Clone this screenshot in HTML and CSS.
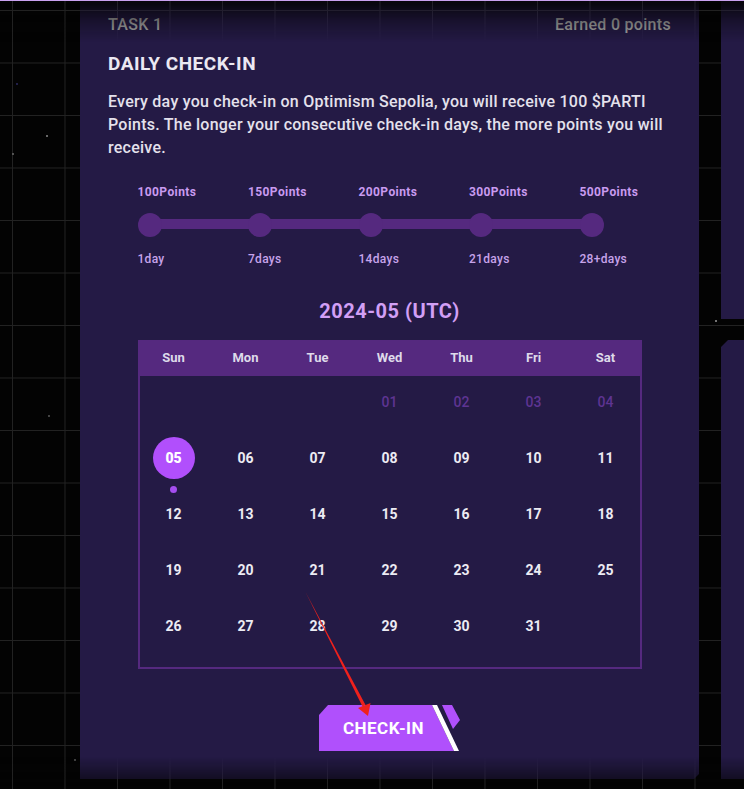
FILE: index.html
```html
<!DOCTYPE html>
<html lang="en">
<head>
  <meta charset="UTF-8">
  <title>Daily Check-in</title>
  <link rel="stylesheet" href="styles.css">
</head>
<body>
  <div class="topline"></div>
  <div class="fade fade-top"></div>
  <div class="fade fade-bottom"></div>

  <span class="star star-1"></span>
  <span class="star star-2"></span>
  <span class="star star-3"></span>
  <span class="star star-4"></span>
  <span class="star star-5"></span>
  <span class="star star-6"></span>

  <main class="board">
    <section class="task-card">
      <div class="task-head">
        <span>TASK 1</span>
        <span>Earned 0 points</span>
      </div>
      <h2 class="task-title">DAILY CHECK-IN</h2>
      <p class="task-desc">Every day you check-in on Optimism Sepolia, you will receive 100 $PARTI Points. The longer your consecutive check-in days, the more points you will receive.</p>

      <div class="timeline">
        <div class="step"><span class="step-points">100Points</span><span class="step-dot"></span><span class="step-days">1day</span></div>
        <div class="step"><span class="step-points">150Points</span><span class="step-dot"></span><span class="step-days">7days</span></div>
        <div class="step"><span class="step-points">200Points</span><span class="step-dot"></span><span class="step-days">14days</span></div>
        <div class="step"><span class="step-points">300Points</span><span class="step-dot"></span><span class="step-days">21days</span></div>
        <div class="step"><span class="step-points">500Points</span><span class="step-dot"></span><span class="step-days">28+days</span></div>
      </div>

      <h3 class="month">2024-05 (UTC)</h3>
      <div class="calendar">
        <div class="cal-head">
          <span>Sun</span><span>Mon</span><span>Tue</span><span>Wed</span><span>Thu</span><span>Fri</span><span>Sat</span>
        </div>
        <div class="cal-body">
          <span></span><span></span><span></span>
          <span class="past">01</span><span class="past">02</span><span class="past">03</span><span class="past">04</span>
          <span class="today"><b>05</b></span><span>06</span><span>07</span><span>08</span><span>09</span><span>10</span><span>11</span>
          <span>12</span><span>13</span><span>14</span><span>15</span><span>16</span><span>17</span><span>18</span>
          <span>19</span><span>20</span><span>21</span><span>22</span><span>23</span><span>24</span><span>25</span>
          <span>26</span><span>27</span><span>28</span><span>29</span><span>30</span><span>31</span><span></span>
        </div>
      </div>

      <div class="actions">
        <button class="checkin-btn" type="button">
          <svg viewBox="0 0 141 46" width="141" height="46">
            <polygon points="9,0 113,0 135,46 0,46 0,10" fill="#b050fc"/>
            <polygon points="113,0 118,0 140,46 135,46" fill="#ffffff"/>
            <polygon points="123,0 133,0 141,15 134,24" fill="#b050fc"/>
          </svg>
          <span>CHECK-IN</span>
        </button>
      </div>
    </section>

    <aside class="side">
      <div class="side-card"></div>
      <div class="side-card cut"></div>
    </aside>
  </main>

  <!-- red pointer drawn on the screenshot -->
  <svg class="pointer" viewBox="0 0 744 789" width="744" height="789">
    <polygon points="305,591 365.5,705 362.5,706.5" fill="#f0211c"/>
    <polygon points="368,716 358,708 370.5,703" fill="#f0211c"/>
  </svg>
</body>
</html>
```

FILE: styles.css
```css
* {
  box-sizing: border-box;
}

body {
  margin: 0;
  height: 789px;
  overflow: hidden;
  font-family: Roboto, "Noto Sans", sans-serif;
  background-color: #030303;
  background-image:
    linear-gradient(90deg, #222 1px, transparent 1px),
    linear-gradient(#222 1px, transparent 1px);
  background-size: 52.5px 52.5px;
  background-position: 12px 0, 0 10px;
}

.topline {
  position: fixed;
  top: 0;
  left: 0;
  right: 0;
  height: 1px;
  background: #c9a2ef;
  z-index: 5;
}

.fade {
  position: fixed;
  left: 0;
  right: 0;
  z-index: 4;
  pointer-events: none;
  background-color: #030303;
  background-image:
    linear-gradient(90deg, #222 1px, transparent 1px),
    linear-gradient(#222 1px, transparent 1px);
  background-size: 52.5px 52.5px;
}

.fade-top {
  top: 0;
  height: 42px;
  background-position: 12px 0, 0 10px;
  -webkit-mask-image: linear-gradient(rgba(0,0,0,0.9), rgba(0,0,0,0.35) 50%, transparent);
  mask-image: linear-gradient(rgba(0,0,0,0.9), rgba(0,0,0,0.35) 50%, transparent);
}

.fade-bottom {
  top: 757px;
  height: 32px;
  background-position: 12px 0, 0 -12px;
  -webkit-mask-image: linear-gradient(transparent, rgba(0,0,0,0.5) 22px, #000);
  mask-image: linear-gradient(transparent, rgba(0,0,0,0.5) 22px, #000);
}

.star {
  position: absolute;
  width: 2px;
  height: 2px;
  border-radius: 50%;
  background: #6a6a6a;
}
.star-1 { left: 16px; top: 83px; background: #2c2a60; }
.star-2 { left: 46px; top: 135px; background: #8a8a8a; }
.star-3 { left: 12px; top: 153px; background: #6a6a6a; }
.star-4 { left: 48px; top: 415px; background: #5a5a5a; }
.star-5 { left: 74px; top: 759px; background: #5a5a5a; }
.star-6 { left: 715px; top: 320px; background: #9a9a9a; }

.board {
  display: flex;
  gap: 22px;
  padding-left: 80px;
  height: 779px;
}

.task-card {
  width: 619px;
  flex-shrink: 0;
  background: #241a45;
  padding: 15px 28px 28px;
  clip-path: polygon(0 0, 100% 0, 100% calc(100% - 5px), calc(100% - 5px) 100%, 0 100%);
}

.task-head {
  display: flex;
  justify-content: space-between;
  font-size: 16px;
  line-height: 20px;
  font-weight: 500;
  letter-spacing: 0.3px;
  color: #a8a8a8;
}

.task-title {
  margin: 17px 0 0;
  font-size: 19px;
  line-height: 24px;
  font-weight: 700;
  color: #ebe8f2;
  letter-spacing: 0.5px;
}

.task-desc {
  margin: 14px 0 0;
  font-size: 16px;
  line-height: 23px;
  font-weight: 500;
  letter-spacing: 0.25px;
  color: #e4e1ec;
}

.timeline {
  width: 504px;
  margin: 26px auto 0;
  display: flex;
  justify-content: space-between;
  background: linear-gradient(#55297f, #55297f) no-repeat 12px 34px / 442px 10px;
}

.step {
  width: 62px;
  display: flex;
  flex-direction: column;
  align-items: flex-start;
}

.step-points {
  font-size: 12px;
  line-height: 14px;
  font-weight: 700;
  letter-spacing: 0.4px;
  color: #c99bf0;
  white-space: nowrap;
}

.step-dot {
  width: 24px;
  height: 24px;
  margin: 14px 0 15px;
  border-radius: 50%;
  background: #55297f;
}

.step-days {
  font-size: 12px;
  line-height: 14px;
  font-weight: 500;
  letter-spacing: 0.3px;
  color: #c7a3ea;
  white-space: nowrap;
}

.month {
  margin: 32px 0 0;
  text-align: center;
  font-size: 20px;
  line-height: 26px;
  font-weight: 700;
  color: #d29ff5;
  letter-spacing: 0.5px;
}

.calendar {
  width: 504px;
  margin: 16px auto 0;
}

.cal-head,
.cal-body {
  display: grid;
  grid-template-columns: repeat(7, 72px);
  text-align: center;
}

.cal-head {
  height: 34px;
  align-items: center;
  background: #55297f;
  font-size: 13px;
  font-weight: 700;
  color: #dedaea;
}

.cal-body {
  grid-auto-rows: 56px;
  padding-bottom: 15px;
  box-shadow: inset 0 0 0 2px #55297f;
}

.cal-body span {
  position: relative;
  display: flex;
  align-items: center;
  justify-content: center;
  font-size: 14px;
  font-weight: 700;
  color: #ecebf3;
}

.cal-body .past {
  color: #5e3492;
  font-weight: 500;
}

.today b {
  width: 42px;
  height: 42px;
  border-radius: 50%;
  background: #b14ffc;
  display: flex;
  align-items: center;
  justify-content: center;
  color: #fff;
}

.today::after {
  content: "";
  position: absolute;
  left: 50%;
  bottom: -7px;
  width: 7px;
  height: 7px;
  margin-left: -4px;
  border-radius: 50%;
  background: #a54ef0;
}

.actions {
  display: flex;
  justify-content: center;
  margin-top: 36px;
}

.checkin-btn {
  position: relative;
  width: 141px;
  height: 46px;
  padding: 0 12px 0 0;
  border: none;
  background: none;
  cursor: pointer;
  font-family: inherit;
  font-size: 17px;
  font-weight: 700;
  letter-spacing: 0.5px;
  color: #fff;
}

.checkin-btn svg {
  position: absolute;
  left: 0;
  top: 0;
}

.checkin-btn span {
  position: relative;
}

.side {
  flex: 1;
  display: flex;
  flex-direction: column;
  gap: 21px;
}

.side-card {
  height: 319px;
  background: #241a45;
}

.side-card.cut {
  flex: 1;
  clip-path: polygon(7px 0, 100% 0, 100% 100%, 0 100%, 0 7px);
}

.pointer {
  position: fixed;
  left: 0;
  top: 0;
  z-index: 6;
  pointer-events: none;
}
```
